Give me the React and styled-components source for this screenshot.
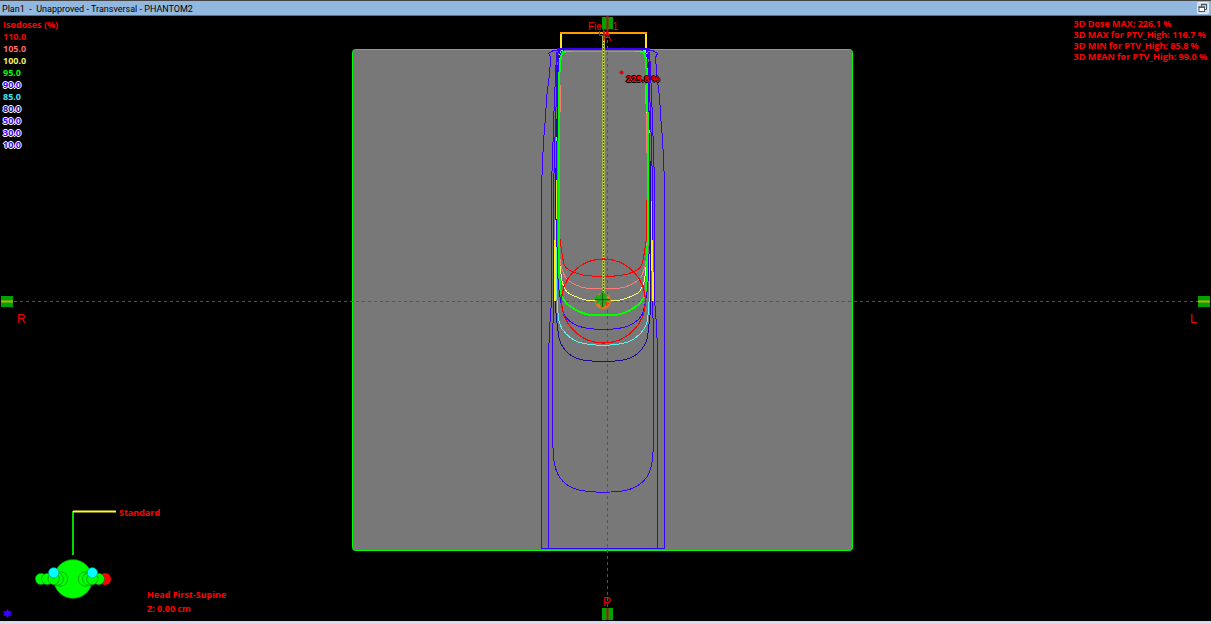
import React from "react";
import styled, { createGlobalStyle } from "styled-components";

const GlobalStyle = createGlobalStyle`
  * { box-sizing: border-box; }
  body { margin: 0; background: #000; }
`;

const Window = styled.div`
  display: flex;
  flex-direction: column;
  min-height: 100vh;
  background: #000;
  font-family: "Open Sans", "Noto Sans", sans-serif;
  font-size: 9px;
`;

const TitleBar = styled.header`
  display: flex;
  align-items: center;
  justify-content: space-between;
  height: 16px;
  padding: 0 2px;
  background: #93b8e0;
  border-top: 1px solid #444;
  border-bottom: 1px solid #5c6f85;
`;

const Title = styled.h1`
  margin: 0;
  padding-top: 1px;
  font-family: Roboto, "Open Sans", sans-serif;
  font-size: 9px;
  line-height: 14px;
  font-weight: 400;
  color: #000;
  white-space: pre;
`;

const RestoreButton = styled.button`
  display: flex;
  padding: 0;
  border: 0;
  background: transparent;
`;

const Viewport = styled.main`
  position: relative;
  flex: 1;
  display: flex;
  min-height: 400px;
  color: #f00;
  font-weight: 700;
`;

const Slice = styled.svg`
  flex: 1;
  width: 100%;
  height: calc(100vh - 19px);
  display: block;
`;

const Overlay = styled.div`
  position: absolute;
  ${(p) => p.$top !== undefined && `top: ${p.$top}px;`}
  ${(p) => p.$bottom !== undefined && `bottom: ${p.$bottom}px;`}
  ${(p) => p.$left !== undefined && `left: ${p.$left}px;`}
  ${(p) => p.$right !== undefined && `right: ${p.$right}px;`}
  line-height: ${(p) => p.$line}px;
  white-space: nowrap;
`;

const LegendTitle = styled.h2`
  margin: 0;
  font-size: 9px;
  font-weight: 700;
`;

const LegendList = styled.ul`
  margin: 0;
  padding: 0;
  list-style: none;
`;

const LegendItem = styled.li`
  color: ${(p) => p.$color};
  text-shadow: ${(p) =>
    p.$halo
      ? "1px 0 #fff, -1px 0 #fff, 0 1px #fff, 0 -1px #fff"
      : "none"};
`;

const Line = styled.p`
  margin: 0;
`;

const StatusStrip = styled.footer`
  height: 3px;
  background: #dcd8ee;
`;

const SliceText = styled.text`
  font-family: "Liberation Sans", sans-serif;
  font-size: ${(p) => p.$size}px;
  font-weight: 400;
  fill: #f00;
`;

const DoseText = styled.text`
  font-size: 9px;
  font-weight: 700;
  fill: #f00;
  text-shadow: 1px 0 #000, -1px 0 #000, 0 1px #000, 0 -1px #000;
`;

const WidgetText = styled.text`
  font-size: 9px;
  font-weight: 700;
  fill: #f00;
`;

const BLUE = "#3a00ff";
const NAVY = "#200a90";
const AXIS = 603.5;

const legend = [
  { label: "110.0", color: "#ff0000" },
  { label: "105.0", color: "#ff6b6b" },
  { label: "100.0", color: "#f0f06a" },
  { label: "95.0", color: "#00ff00" },
  { label: "90.0", color: BLUE, halo: true },
  { label: "85.0", color: "#40e8e8" },
  { label: "80.0", color: NAVY, halo: true },
  { label: "50.0", color: BLUE, halo: true },
  { label: "30.0", color: BLUE, halo: true },
  { label: "10.0", color: BLUE, halo: true },
];

const stats = [
  "3D Dose MAX: 226.1 %",
  "3D MAX for PTV_High: 116.7 %",
  "3D MIN for PTV_High: 85.8 %",
  "3D MEAN for PTV_High: 99.0 %",
];

// Each contour lists its left half from top to bottom; the right half is its mirror.
const contours = [
  { color: BLUE, points: [[562, 50], [554, 50], [549, 53], [551, 57], [550, 73], [547, 97], [546, 115], [544, 140], [543, 160], [542, 185], [542, 210], [542, 548], [603, 548]], straight: true },
  { color: BLUE, points: [[564, 50], [557, 52], [556, 73], [554, 120], [553, 157], [552, 180], [552, 300], [550, 327], [549, 353], [549, 430], [549, 548]], open: true, straight: true },
  { color: BLUE, points: [[564, 50], [558, 54], [557, 90], [555, 150], [554, 200], [554, 300], [553, 340], [553, 430], [554, 457], [556, 468], [560, 477], [567, 484], [577, 489], [588, 491], [603, 492]] },
  { color: NAVY, points: [[564, 50], [559, 56], [558, 90], [557, 140], [556, 200], [556, 300], [558, 327], [560, 340], [565, 349], [573, 356], [585, 360], [603, 361]] },
  { color: "#60f0f0", points: [[564, 51], [560, 56], [558, 110], [557, 170], [557, 280], [558, 307], [560, 323], [566, 333], [577, 341], [590, 344], [603, 345]] },
  { color: BLUE, points: [[564, 51], [559, 60], [558, 110], [557, 180], [558, 270], [561, 300], [565, 315], [575, 324], [588, 328], [603, 329]] },
  { color: "#ff7b7b", points: [[561, 85], [560, 130], [559, 200], [560, 253], [562, 267], [566, 277], [575, 284], [588, 288], [603, 288]] },
  { color: "#ff0000", points: [[560, 200], [560, 233], [562, 250], [565, 265], [572, 271], [585, 275], [603, 276]] },
  { color: "#f5f57a", points: [[560, 110], [559, 130], [559, 240], [561, 270], [563, 283], [568, 292], [578, 297], [588, 300], [603, 300]] },
  { color: "#00ff00", width: 2, points: [[567, 51], [562, 54], [560, 70], [559, 120], [559, 180], [559, 240], [560, 280], [562, 295], [567, 303], [577, 310], [588, 314], [603, 315]] },
];

const smooth = (pts) =>
  pts.slice(1).reduce((d, p, n) => {
    const a = pts[n - 1] || pts[n];
    const b = pts[n];
    const c = pts[n + 2] || p;
    return `${d} C${b[0] + (p[0] - a[0]) / 6} ${b[1] + (p[1] - a[1]) / 6} ${p[0] - (c[0] - b[0]) / 6} ${p[1] - (c[1] - b[1]) / 6} ${p[0]} ${p[1]}`;
  }, `M${pts[0].join(" ")}`);

const toPath = ({ points, open, straight }) => {
  const right = points.map(([x, y]) => [2 * AXIS - x, y]);
  const draw = straight ? (p) => `M${p.map((q) => q.join(" ")).join("L")}` : smooth;
  return open
    ? `${draw(points)} ${draw(right)}`
    : draw([...points, ...right.reverse()]);
};

function DoseSlice() {
  return (
    <Slice viewBox="0 16 1211 605" role="img" aria-label="Transversal dose distribution">
      <rect x="352.5" y="49.5" width="500" height="501" rx="3" fill="#787878" stroke="#00ff00" />
      <g stroke="#555" strokeDasharray="3 3" shapeRendering="crispEdges">
        <path d="M607.5 16V620" />
        <path d="M14 301.5H1198" />
      </g>

      <g fill="none" shapeRendering="crispEdges">
        <g transform="translate(-0.4 0.4)">
          {contours.map((c, i) => (
            <path key={i} d={toPath(c)} stroke={c.color} strokeWidth={c.width || 1} />
          ))}
        </g>
        <path d="M557 180L555.5 240M651 200L652 240" stroke="#e8e020" />
        <path d="M555.5 240L555 301M652 240L653 301" stroke="#fff000" strokeWidth="2" />
        <path d="M561 49V33M646 49V33" stroke="#ffe820" strokeWidth="2" />
        <path d="M560 33H647" stroke="#ff9c00" strokeWidth="2" />
        <path d="M557 49H650" stroke={BLUE} strokeWidth="2" />
        <path d="M566 51.5H642" stroke="#00f040" />
        <path d="M562 51.5H572M635 51.5H645" stroke="#20d8e8" />
        <path d="M603.5 36V300" stroke="#a3b045" strokeWidth="3" />
        <path d="M603.5 36V300" stroke="#f0e860" />
        <path d="M603.5 36V300" stroke="#e82000" strokeDasharray="2 1" />
      </g>
      <circle cx="603.5" cy="301" r="42" fill="none" stroke="#f00" strokeWidth="1.2" shapeRendering="crispEdges" />

      <circle cx="603" cy="301" r="8" fill="#e07a20" />
      <path d="M605 302L610 303L606 307Z" fill="#f03a10" />
      <path d="M602 290L605 294L608 295L606 298L611 300L606 302L604 307L601 308L600 303L596 304L597 300L593 299L597 295L600 295Z" fill="#20aa20" />
      <path d="M602.5 293V307M595 299.5H610" stroke="#145c14" strokeWidth="1" />

      <SliceText $size={10} x="588" y="30">Field 1</SliceText>
      <path d="M599.5 31V35.5H604.5V31M603.5 30V40" fill="none" stroke="#e01010" />
      <rect x="602" y="17" width="11" height="12" fill="#00a000" />
      <path d="M607.5 16V36" stroke="#b01010" strokeWidth="2" />
      <rect x="602" y="608" width="11" height="12" fill="#00a000" />
      <path d="M607.5 608V620" stroke="#b01010" strokeWidth="2" />
      <rect x="1" y="296" width="12" height="11" fill="#00a000" />
      <path d="M1 301.5H13" stroke="#b8b000" strokeWidth="2" />
      <rect x="1198" y="296" width="12" height="11" fill="#00a000" />
      <path d="M1198 301.5H1210" stroke="#b8b000" strokeWidth="2" />
      <SliceText $size={12} x="607" y="41" textAnchor="middle">A</SliceText>
      <SliceText $size={12} x="607" y="606" textAnchor="middle">P</SliceText>
      <SliceText $size={12} x="17" y="323">R</SliceText>
      <SliceText $size={12} x="1190" y="323">L</SliceText>

      <circle cx="621.5" cy="72.5" r="2" fill="#e00000" />
      <DoseText x="626" y="82">225.8 %</DoseText>
    </Slice>
  );
}

function PatientFigure() {
  return (
    <svg width="170" height="120" viewBox="0 501 170 120" role="img" aria-label="Patient orientation">
      <path d="M73 511V555" stroke="#00d800" strokeWidth="2" />
      <path d="M73 511.5H116" stroke="#ffff20" strokeWidth="2" />
      <WidgetText x="119" y="516">Standard</WidgetText>
      <circle cx="105" cy="579" r="6" fill="#f00" />
      <g fill="#00ff00" stroke="#087808" strokeWidth="0.6">
        <circle cx="73" cy="579" r="19.4" />
        <circle cx="60.5" cy="579" r="7.2" />
        <circle cx="57" cy="579" r="6.4" />
        <circle cx="85.5" cy="579" r="7.2" />
        <circle cx="89" cy="579" r="6.4" />
        <circle cx="41" cy="579" r="5.7" />
        <circle cx="47.3" cy="579" r="5.7" />
        <circle cx="53.7" cy="579" r="5.7" />
        <circle cx="98.7" cy="579" r="5.7" />
        <circle cx="92.3" cy="579" r="5.7" />
      </g>
      <g fill="#00ffff" stroke="#007878" strokeWidth="0.6">
        <circle cx="53.7" cy="572.7" r="5.2" />
        <circle cx="92.3" cy="572.7" r="5.2" />
      </g>
      <path d="M7.5 609L9 611.3H12L10.7 613.5L12 615.7H9L7.5 618L6 615.7H3L4.3 613.5L3 611.3H6Z" fill={BLUE} />
    </svg>
  );
}

export default function App() {
  return (
    <Window>
      <GlobalStyle />
      <TitleBar>
        <Title>{"Plan1  -  Unapproved - Transversal - PHANTOM2"}</Title>
        <RestoreButton aria-label="Restore view">
          <svg width="12" height="12" viewBox="0 0 12 12">
            <rect x="0.5" y="0.5" width="11" height="11" rx="1" fill="#d3deeb" stroke="#e6edf5" />
            <path d="M4.5 4V2.5H9.5V7.5H8" fill="none" stroke="#4c5660" />
            <path d="M4 2.5H10" stroke="#4c5660" strokeWidth="1.4" />
            <rect x="2" y="5" width="5.5" height="4.5" fill="#fff" stroke="#4c5660" />
            <path d="M1.5 5.2H8" stroke="#4c5660" strokeWidth="1.4" />
          </svg>
        </RestoreButton>
      </TitleBar>
      <Viewport>
        <DoseSlice />
        <Overlay $top={3} $left={3} $line={12}>
          <LegendTitle>Isodoses (%)</LegendTitle>
          <LegendList>
            {legend.map(({ label, color, halo }) => (
              <LegendItem key={label} $color={color} $halo={halo}>{label}</LegendItem>
            ))}
          </LegendList>
        </Overlay>
        <Overlay $top={2} $right={4} $line={11}>
          {stats.map((s) => <Line key={s}>{s}</Line>)}
        </Overlay>
        <Overlay $bottom={0} $left={0} $line={0}>
          <PatientFigure />
        </Overlay>
        <Overlay $bottom={5} $left={147} $line={14}>
          <Line>Head First-Supine</Line>
          <Line>Z: 0.00 cm</Line>
        </Overlay>
      </Viewport>
      <StatusStrip />
    </Window>
  );
}
